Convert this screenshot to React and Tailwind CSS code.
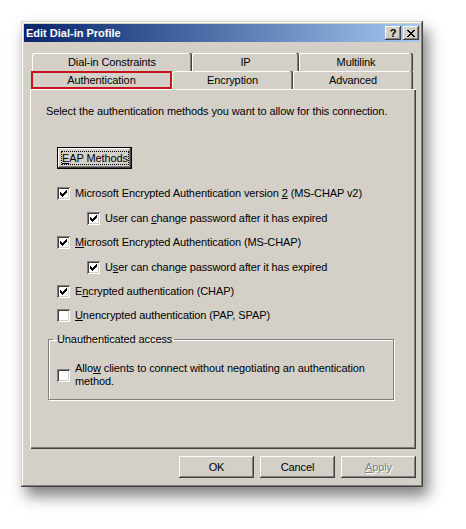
import React from "react";

const CHECK_COLS = [
  [0, 2], [1, 3], [2, 4], [3, 3], [4, 2], [5, 1], [6, 0],
];

function CheckMark() {
  return (
    <svg width="7" height="7" viewBox="0 0 7 7" shapeRendering="crispEdges">
      {CHECK_COLS.map(([x, y]) => (
        <rect key={x} x={x} y={y} width="1" height="3" fill="#000" />
      ))}
    </svg>
  );
}

function Check({ checked }) {
  return (
    <span className="inline-flex items-center justify-center w-[13px] h-[13px] shrink-0 bg-white shadow-[inset_1px_1px_#808080,inset_-1px_-1px_#fff,inset_2px_2px_#404040,inset_-2px_-2px_#d4d0c8]">
      {checked && <CheckMark />}
    </span>
  );
}

function Row({ checked, children, className }) {
  return (
    <div className={"flex items-center gap-[5px] " + className}>
      <Check checked={checked} />
      <span className="leading-[13px] whitespace-nowrap">{children}</span>
    </div>
  );
}

const BEVEL =
  "shadow-[inset_-1px_-1px_#404040,inset_1px_1px_#fff,inset_-2px_-2px_#808080,inset_2px_2px_#d4d0c8]";

function CloseGlyph() {
  const rows = [
    [[0, 2], [6, 2]],
    [[1, 2], [5, 2]],
    [[2, 4]],
    [[3, 2]],
    [[2, 4]],
    [[1, 2], [5, 2]],
    [[0, 2], [6, 2]],
  ];
  return (
    <svg width="8" height="7" viewBox="0 0 8 7" shapeRendering="crispEdges">
      {rows.map((segs, y) =>
        segs.map(([x, w]) => (
          <rect key={y + "-" + x} x={x} y={y} width={w} height="1" fill="#000" />
        ))
      )}
    </svg>
  );
}

function BackTab({ w, children }) {
  return (
    <div
      className={
        "h-[18px] flex items-center justify-center rounded-t-[2px] bg-[#d4d0c8] shadow-[inset_-1px_0_#404040,inset_-2px_0_#808080,inset_1px_1px_#fff] " +
        w
      }
    >
      {children}
    </div>
  );
}

export default function App() {
  return (
    <div className="w-[466px] h-[529px] bg-white pt-[21px] pl-[21px] font-['Liberation_Sans',Arial,sans-serif] text-[11px] text-black tracking-[-0.1px]">
      <div className="w-[402px] h-[466px] bg-[#d4d0c8] p-[3px] shadow-[inset_-1px_-1px_#404040,inset_1px_1px_#d4d0c8,inset_-2px_-2px_#808080,inset_2px_2px_#fff,5px_9px_14px_rgba(0,0,0,0.5)]">
        {/* Title bar */}
        <div className="h-[18px] flex items-center justify-between bg-linear-to-r from-[#0a246a] to-[#a6caf0] pl-[2px] pr-[1px]">
          <span className="text-white font-bold text-[11px] tracking-normal">
            Edit Dial-in Profile
          </span>
          <div className="flex gap-[2px]">
            <div
              className={
                "w-[16px] h-[14px] bg-[#d4d0c8] flex items-center justify-center font-bold text-[11px] leading-none " +
                BEVEL
              }
            >
              ?
            </div>
            <div
              className={
                "w-[16px] h-[14px] bg-[#d4d0c8] flex items-center justify-center " +
                BEVEL
              }
            >
              <CloseGlyph />
            </div>
          </div>
        </div>

        {/* Tabs */}
        <div className="mt-[11px] ml-[8px]">
          <div className="flex">
            <BackTab w="w-[160px]">Dial-in Constraints</BackTab>
            <BackTab w="w-[107px]">IP</BackTab>
            <BackTab w="w-[114px]">Multilink</BackTab>
          </div>
          <div className="flex">
            <div className="w-[141px] -ml-[1px] h-[18px] flex items-center justify-center border-2 border-[#c4141c] bg-[#d4d0c8]">
              Authentication
            </div>
            <BackTab w="w-[121px]">Encryption</BackTab>
            <BackTab w="w-[120px]">Advanced</BackTab>
          </div>
        </div>

        {/* Panel */}
        <div className="ml-[6px] w-[386px] h-[360px] pt-[16px] pl-[16px] shadow-[inset_1px_1px_#fff,inset_-1px_-1px_#404040,inset_-2px_-2px_#808080]">
          <p className="leading-[13px]">
            Select the authentication methods you want to allow for this connection.
          </p>

          <div className="ml-[11px] mt-[29px] w-[75px] h-[22px] border border-black bg-[#d4d0c8] shadow-[inset_-1px_-1px_#404040,inset_1px_1px_#fff,inset_-2px_-2px_#808080] p-[3px] flex">
            <span className="flex-1 flex items-center justify-center border border-dotted border-black whitespace-nowrap">
              <span className="whitespace-nowrap">
                <u>E</u>AP Methods
              </span>
            </span>
          </div>

          <Row checked className="ml-[11px] mt-[18px]">
            Microsoft Encrypted Authentication version <u>2</u> (MS-CHAP v2)
          </Row>
          <Row checked className="ml-[41px] mt-[12px]">
            User can <u>c</u>hange password after it has expired
          </Row>
          <Row checked className="ml-[11px] mt-[11px]">
            <u>M</u>icrosoft Encrypted Authentication (MS-CHAP)
          </Row>
          <Row checked className="ml-[41px] mt-[12px]">
            U<u>s</u>er can change password after it has expired
          </Row>
          <Row checked className="ml-[11px] mt-[11px]">
            E<u>n</u>crypted authentication (CHAP)
          </Row>
          <Row className="ml-[11px] mt-[11px]">
            <u>U</u>nencrypted authentication (PAP, SPAP)
          </Row>

          <fieldset className="ml-[2px] mt-[11px] w-[346px] h-[67px] border border-[#808080] shadow-[inset_1px_1px_#fff,1px_1px_#fff] px-[8px] pt-[16px]">
            <legend className="-ml-[4px] pl-[4px] pr-[2px] leading-[13px]">
              Unauthenticated access
            </legend>
            <div className="flex items-center gap-[5px]">
              <Check />
              <span className="leading-[13px] w-[300px]">
                Allo<u>w</u> clients to connect without negotiating an authentication
                method.
              </span>
            </div>
          </fieldset>
        </div>

        {/* Buttons */}
        <div className="mt-[7px] flex justify-end gap-[6px] pr-[4px]">
          <div className={"w-[75px] h-[22px] flex items-center justify-center " + BEVEL}>
            OK
          </div>
          <div className={"w-[75px] h-[22px] flex items-center justify-center " + BEVEL}>
            Cancel
          </div>
          <div
            className={
              "w-[75px] h-[22px] flex items-center justify-center text-[#808080] [text-shadow:1px_1px_0_#fff] " +
              BEVEL
            }
          >
            <span>
              <u>A</u>pply
            </span>
          </div>
        </div>
      </div>
    </div>
  );
}
